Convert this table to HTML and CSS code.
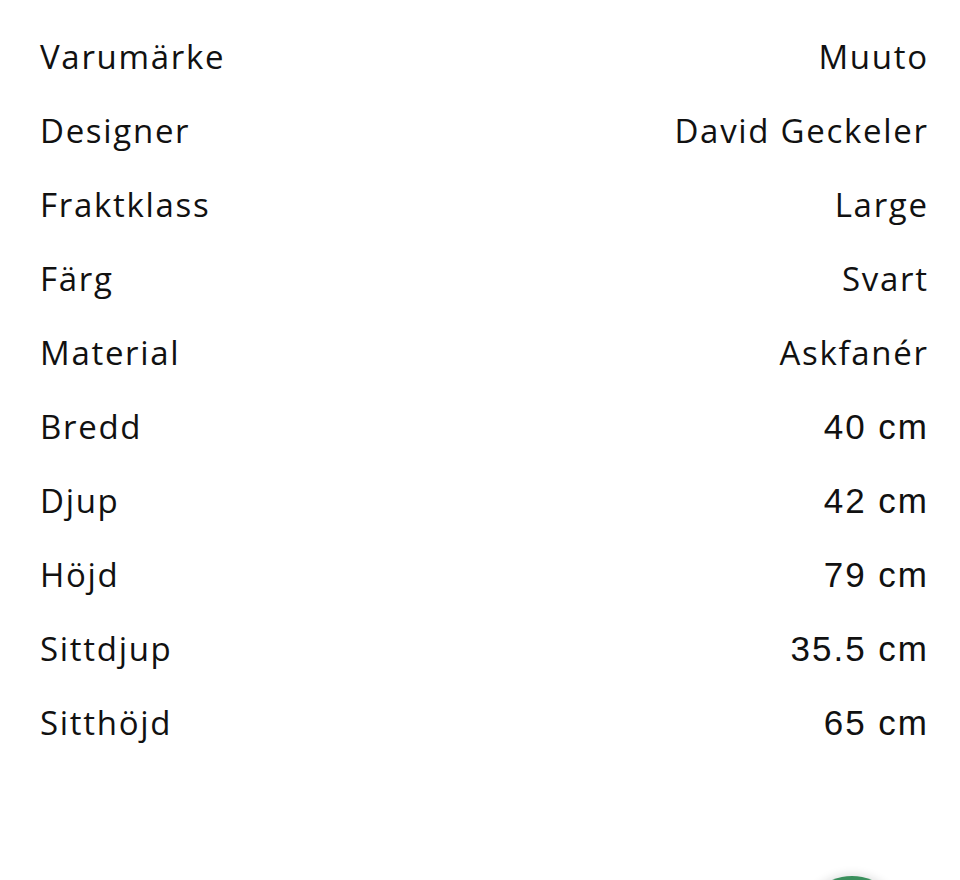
FILE: index.html
```html
<!DOCTYPE html>
<html lang="sv">
<head>
<meta charset="utf-8">
<link rel="stylesheet" href="styles.css">
</head>
<body>
<dl class="specs">
  <div class="row"><dt>Varumärke</dt><dd>Muuto</dd></div>
  <div class="row"><dt>Designer</dt><dd>David Geckeler</dd></div>
  <div class="row"><dt>Fraktklass</dt><dd>Large</dd></div>
  <div class="row"><dt>Färg</dt><dd>Svart</dd></div>
  <div class="row"><dt>Material</dt><dd>Askfanér</dd></div>
  <div class="row"><dt>Bredd</dt><dd class="num">40 cm</dd></div>
  <div class="row"><dt>Djup</dt><dd class="num">42 cm</dd></div>
  <div class="row"><dt>Höjd</dt><dd class="num">79 cm</dd></div>
  <div class="row"><dt>Sittdjup</dt><dd class="num">35.5 cm</dd></div>
  <div class="row"><dt>Sitthöjd</dt><dd class="num">65 cm</dd></div>
</dl>
<div class="chat-button"></div>
</body>
</html>
```
FILE: styles.css
```css
html, body {
  margin: 0;
  padding: 0;
  background: #ffffff;
  overflow: hidden;
}
body {
  width: 960px;
  height: 880px;
  font-family: "Open Sans", "DejaVu Sans", sans-serif;
  color: #111111;
}
.specs {
  margin: 0;
  padding: 20px 33px 0 40px;
}
.row {
  display: flex;
  justify-content: space-between;
  align-items: center;
  height: 74px;
}
dt, dd {
  margin: 0;
  font-size: 33px;
  line-height: 74px;
  font-weight: 400;
  letter-spacing: 1.7px;
}
dd {
  margin-right: -1.7px;
}
dd.num {
  font-family: "Liberation Sans", Arial, sans-serif;
  font-size: 35px;
  letter-spacing: 2px;
  margin-right: -2px;
}
.chat-button {
  position: fixed;
  left: 800px;
  top: 876px;
  width: 104px;
  height: 104px;
  border-radius: 50%;
  background: #3a8f5c;
  box-shadow: 0 -2px 10px rgba(0, 0, 0, 0.12);
}
```
